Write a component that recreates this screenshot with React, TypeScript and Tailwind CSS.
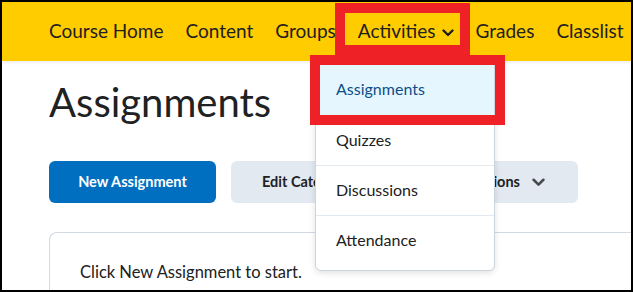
import React from "react";

const navItems = ["Course Home", "Content", "Groups", "Activities", "Grades", "Classlist"];
const menuItems = ["Assignments", "Quizzes", "Discussions", "Attendance"];

function Chevron({ className }: { className?: string }) {
  return (
    <svg viewBox="0 0 12 8" className={className} fill="none">
      <path d="M1.5 1.5 6 6l4.5-4.5" stroke="currentColor" strokeWidth="2.4" strokeLinecap="round" strokeLinejoin="round" />
    </svg>
  );
}

export default function App() {
  return (
    <div
      className="relative w-[633px] h-[292px] overflow-hidden border-2 border-black bg-white text-[#202122]"
      style={{ fontFamily: "Lato, 'Noto Sans', sans-serif" }}
    >
      {/* Nav bar */}
      <div className="h-[59px] bg-[#ffcc00] flex items-center pl-[47px] gap-[22px] shadow-[0_2px_3px_rgba(0,0,0,0.06)]">
        {navItems.map((item) => (
          <div key={item} className="flex items-center gap-[6px] text-[19px] whitespace-nowrap text-[#1f2021]">
            {item}
            {item === "Activities" && <Chevron className="w-[12px] h-[8px] mt-[3px]" />}
          </div>
        ))}
      </div>

      {/* Page body */}
      <div className="pl-[47px]">
        <h1 className="mt-[17px] text-[40px] leading-[48px] font-normal text-[#202122]">Assignments</h1>

        <div className="mt-[35px] flex gap-[15px]">
          <button className="w-[167px] h-[42px] rounded-[6px] bg-[#006fbf] text-white text-[14.5px] font-bold">
            New Assignment
          </button>
          <button className="w-[172px] h-[42px] rounded-[6px] bg-[#e3e9f1] text-[#202122] text-[14.5px] font-bold text-left pl-[31px]">
            Edit Categories
          </button>
          <button className="w-[160px] h-[42px] rounded-[6px] bg-[#e3e9f1] text-[#202122] text-[14.5px] font-bold flex items-center justify-end gap-[12px] pr-[33px]">
            More Actions
            <Chevron className="w-[13px] h-[9px] text-[#494c4e]" />
          </button>
        </div>

        <div className="mt-[29px] h-[80px] rounded-tl-[8px] border-l border-t border-[#d3d9e3] pl-[30px] pt-[27px] text-[16.5px]">
          Click New Assignment to start.
        </div>
      </div>

      {/* Dropdown menu */}
      <div className="absolute left-[313px] top-[57px] w-[180px] h-[212px] rounded-[6px] border border-[#cdd5dc] bg-white shadow-[0_2px_6px_rgba(0,0,0,0.12)] pt-[5px]">
        {menuItems.map((item, i) => (
          <div
            key={item}
            className={
              i === 0
                ? "h-[50px] flex items-center pl-[20px] pb-[2px] text-[16px] bg-[#e6f6fe] text-[#0b4f8a]"
                : "h-[50px] flex items-center pl-[20px] pb-[2px] text-[16px] border-t border-[#e3e9f1] text-[#202122]"
            }
          >
            {item}
          </div>
        ))}
      </div>

      {/* Highlight boxes */}
      <div className="absolute left-[333px] top-[1px] w-[135px] h-[52px] border-[10px] border-[#ee2127]" />
      <div className="absolute left-[308px] top-[53px] w-[195px] h-[70px] border-[10px] border-[#ee2127]" />
    </div>
  );
}
